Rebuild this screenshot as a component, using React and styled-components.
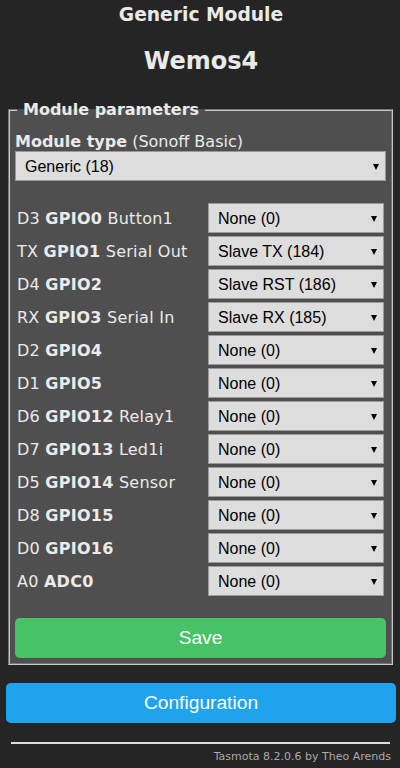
import styled, { createGlobalStyle } from 'styled-components'

const GlobalStyle = createGlobalStyle`
  html, body {
    margin: 0;
    padding: 0;
    background: #252525;
  }
  body {
    font-family: "DejaVu Sans", Verdana, sans-serif;
    color: #eaeaea;
  }
`

const Page = styled.div`
  width: 390px;
  margin-left: 6px;
  padding-bottom: 10px;
`

const Title = styled.h3`
  margin: 4px 0 0;
  text-align: center;
  font-size: 18.7px;
  line-height: 22px;
  font-weight: bold;
`

const DeviceName = styled.h2`
  margin: 21px 0 0;
  text-align: center;
  font-size: 24px;
  line-height: 28px;
  font-weight: bold;
`

const Fieldset = styled.fieldset`
  margin: 25px 3px 0 2px;
  padding: 0 5px 5px;
  background: #4f4f4f;
  border: 2px groove #c8c8c8;
  min-inline-size: 0;
`

const Legend = styled.legend`
  margin-left: 2px;
  padding: 0 6px 0 6px;
  font-weight: bold;
  font-size: 16px;
  line-height: 19px;
`

const FieldLabel = styled.div`
  margin-top: 13px;
  font-size: 16px;
  line-height: 19px;
`

const SelectWrap = styled.div`
  position: relative;
  width: 100%;
  &::after {
    content: '';
    position: absolute;
    right: 7px;
    top: 50%;
    margin-top: -2px;
    border-left: 3.5px solid transparent;
    border-right: 3.5px solid transparent;
    border-top: 6px solid #000;
    pointer-events: none;
  }
`

const Select = styled.select`
  appearance: none;
  -webkit-appearance: none;
  display: block;
  width: 100%;
  height: 30px;
  margin: 0;
  padding: 0 20px 0 9px;
  box-sizing: border-box;
  background: #dddddd;
  color: #000;
  border: 1px solid #9a9a9a;
  border-radius: 0;
  font-family: "Liberation Sans", Arial, sans-serif;
  font-size: 16px;
`

const GpioTable = styled.div`
  display: grid;
  grid-template-columns: 1fr 176px;
  column-gap: 4px;
  row-gap: 3px;
  margin: 22px 0 0;
  padding: 0 2px;
`

const GpioLabel = styled.div`
  display: flex;
  align-items: center;
  font-size: 16px;
  letter-spacing: 0.25px;
  white-space: nowrap;
`

const Button = styled.button`
  display: block;
  width: 100%;
  border: 0;
  border-radius: 0.3rem;
  background: ${p => p.$color};
  color: #faffff;
  height: 40px;
  line-height: 40px;
  padding: 0;
  font-family: "Liberation Sans", Arial, sans-serif;
  font-size: 19.2px;
  cursor: pointer;
`

const SaveButton = styled(Button)`
  margin-top: 22px;
`

const ConfigButton = styled(Button)`
  margin-top: 18px;
`

const Rule = styled.hr`
  margin: 19px 6px 0 5px;
  border: 0;
  border-top: 2px solid #dcdcdc;
  height: 0;
`

const Footer = styled.div`
  text-align: right;
  margin: 6px 5px 0 0;
  font-size: 11px;
  color: #aaaaaa;
`

const gpios = [
  ['D3', 'GPIO0', 'Button1', 'None (0)'],
  ['TX', 'GPIO1', 'Serial Out', 'Slave TX (184)'],
  ['D4', 'GPIO2', '', 'Slave RST (186)'],
  ['RX', 'GPIO3', 'Serial In', 'Slave RX (185)'],
  ['D2', 'GPIO4', '', 'None (0)'],
  ['D1', 'GPIO5', '', 'None (0)'],
  ['D6', 'GPIO12', 'Relay1', 'None (0)'],
  ['D7', 'GPIO13', 'Led1i', 'None (0)'],
  ['D5', 'GPIO14', 'Sensor', 'None (0)'],
  ['D8', 'GPIO15', '', 'None (0)'],
  ['D0', 'GPIO16', '', 'None (0)'],
  ['A0', 'ADC0', '', 'None (0)'],
]

export default function App() {
  return (
    <>
      <GlobalStyle />
      <Page>
        <Title>Generic Module</Title>
        <DeviceName>Wemos4</DeviceName>
        <Fieldset>
          <Legend>Module parameters</Legend>
          <FieldLabel><b>Module type</b> (Sonoff Basic)</FieldLabel>
          <SelectWrap>
            <Select defaultValue="Generic (18)">
              <option>Generic (18)</option>
            </Select>
          </SelectWrap>
          <GpioTable>
            {gpios.map(([pin, gpio, fn, val]) => [
              <GpioLabel key={gpio}>
                {pin}&nbsp;<b>{gpio}</b>{fn && <>&nbsp;{fn}</>}
              </GpioLabel>,
              <SelectWrap key={gpio + 's'}>
                <Select defaultValue={val}>
                  <option>{val}</option>
                </Select>
              </SelectWrap>,
            ])}
          </GpioTable>
          <SaveButton $color="#47c266">Save</SaveButton>
        </Fieldset>
        <ConfigButton $color="#1fa3ec">Configuration</ConfigButton>
        <Rule />
        <Footer>Tasmota 8.2.0.6 by Theo Arends</Footer>
      </Page>
    </>
  )
}
